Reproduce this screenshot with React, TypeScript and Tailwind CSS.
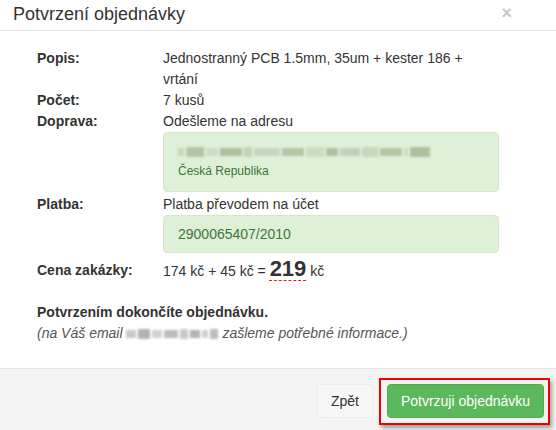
import React from "react";

const font = { fontFamily: '"Liberation Sans", Arial, sans-serif' };

function Blur({ widths, colors, h = 8 }: { widths: number[]; colors: string[]; h?: number }) {
  return (
    <span className="inline-flex items-center gap-[2px] align-middle blur-[1px]">
      {widths.map((w, i) => (
        <span
          key={i}
          className="inline-block"
          style={{ width: w, height: i % 3 === 1 ? h + 2 : h, background: colors[i % colors.length] }}
        />
      ))}
    </span>
  );
}

export default function App() {
  return (
    <div className="w-[556px] h-[430px] bg-white text-[14px] leading-[21px] text-[#333] overflow-hidden" style={font}>
      <div className="h-[31px] border-b border-[#e5e5e5] flex items-center justify-between pl-[13px] pr-[44px]">
        <div className="text-[18px] leading-[20px] text-[#333] -mt-[2px]">Potvrzení objednávky</div>
        <div className="text-[18px] font-bold text-[#c8c8c8] leading-none -mt-[4px]">×</div>
      </div>

      <div className="pl-[37px] pt-[17px]">
        <div className="grid grid-cols-[126px_336px]">
          <div className="font-bold">Popis:</div>
          <div>Jednostranný PCB 1.5mm, 35um + kester 186 + vrtání</div>

          <div className="font-bold">Počet:</div>
          <div>7 kusů</div>

          <div className="font-bold">Doprava:</div>
          <div>
            <div>Odešleme na adresu</div>
            <div className="h-[60px] rounded-[4px] border border-[#d6e9c6] bg-[#dff0d8] text-[#3c763d] px-[14px] pt-[13px]">
              <div className="h-[12px] flex items-center">
                <Blur
                  widths={[6, 18, 12, 22, 8, 26, 22, 18, 12, 20, 16, 22, 4, 20]}
                  colors={["#c4d8bb", "#b0c8a6", "#cadcc2", "#a9c29f", "#bfd3b6"]}
                  h={8}
                />
              </div>
              <div className="text-[12px] leading-[17px] mt-[5px]">Česká Republika</div>
            </div>
          </div>

          <div className="font-bold mt-[2px]">Platba:</div>
          <div className="mt-[2px]">
            <div>Platba převodem na účet</div>
            <div className="h-[38px] rounded-[4px] border border-[#d6e9c6] bg-[#dff0d8] text-[#3c763d] px-[14px] flex items-center">
              2900065407/2010
            </div>
          </div>

          <div className="font-bold mt-[7px]">Cena zakázky:</div>
          <div className="mt-[3px] flex items-baseline">
            <span>174 kč + 45 kč =&nbsp;</span>
            <span className="text-[22px] leading-[26px] font-bold underline decoration-dashed decoration-[#e02020] decoration-1 underline-offset-[4px]">219</span>
            <span>&nbsp;kč</span>
          </div>
        </div>

        <div className="mt-[20px] font-bold">Potvrzením dokončíte objednávku.</div>
        <div className="italic text-[#555]">
          (na Váš email{" "}
          <Blur widths={[10, 12, 10, 14, 8, 10, 6, 8]} colors={["#c9c9c9", "#b3b3b3", "#d2d2d2", "#bdbdbd"]} h={8} />{" "}
          zašleme potřebné informace.)
        </div>
      </div>

      <div className="mt-[24px] border-t border-[#e5e5e5] bg-[#f4f4f4] h-[100px] flex justify-end pt-[15px] pr-[6px]">
        <div className="flex items-start">
          <button className="h-[34px] px-[13px] rounded-[4px] bg-[#f7f7f7] border border-[#ececec] text-[#333] text-[14px] mr-[6px]" style={font}>
            Zpět
          </button>
          <div className="border-[2px] border-[#ee0000] pl-[6px] pr-[4px] pt-[4px] pb-[5px] -mt-[6px] shadow-[2px_3px_4px_rgba(0,0,0,0.35)]">
            <button className="h-[34px] w-[157px] rounded-[4px] bg-[#5cb85c] border border-[#4cae4c] text-white text-[14px]" style={font}>
              Potvrzuji objednávku
            </button>
          </div>
        </div>
      </div>
    </div>
  );
}
